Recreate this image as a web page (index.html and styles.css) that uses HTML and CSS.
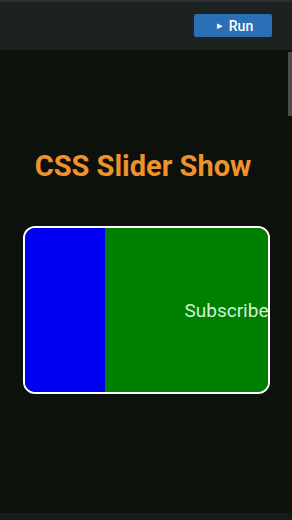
FILE: index.html
```html
<!DOCTYPE html>
<html lang="en">
<head>
    <meta charset="UTF-8">
    <meta name="viewport" content="width=device-width, initial-scale=1.0">
    <title>CSS Slider Show</title>
    <link rel="stylesheet" href="styles.css">
</head>
<body>
    <div class="topbar">
        <button class="run-btn"><span class="run-icon">&#9656;</span> Run</button>
    </div>

    <div class="preview">
        <h1 class="title">CSS Slider Show</h1>
        <div class="slider">
            <div class="track">
                <div class="slide blue"></div>
                <div class="slide green">Subscribe</div>
                <div class="slide red"></div>
            </div>
        </div>
        <div class="scroll-thumb"></div> <!-- fake scrollbar -->
    </div>
    <div class="bottom-strip"></div>
</body>
</html>
```

FILE: styles.css
```css
* {
    box-sizing: border-box;
}

body {
    margin: 0;
    width: 292px;
    height: 520px;
    overflow: hidden;
    background-color: #0c110c;
    font-family: Roboto, "Liberation Sans", sans-serif;
    display: flex;
    flex-direction: column;
}

.topbar {
    height: 50px;
    background-color: #1b2220;
    border-top: 2px solid #2a3031;
    display: flex;
    justify-content: flex-end;
    align-items: flex-start;
    padding: 12px 20px 0 0;
}

.run-btn {
    width: 78px;
    height: 23px;
    background-color: #2b6fb6;
    color: #ffffff;
    border: none;
    border-radius: 2px;
    font-family: Roboto, "Liberation Sans", sans-serif;
    font-size: 14px;
    font-weight: 500;
    display: flex;
    align-items: center;
    justify-content: center;
    gap: 6px;
    padding: 0 0 0 4px;
}

.run-icon {
    font-size: 11px;
}

.preview {
    position: relative;
    flex: 1;
    padding-top: 99px;
}

.title {
    margin: 0 0 43px 0;
    color: #ef922d;
    font-size: 29px;
    font-weight: 700;
    text-align: center;
    line-height: 34px;
    padding-right: 6px;
}

.slider {
    width: 247px;
    height: 168px;
    margin-left: 23px;
    border: 2px solid #ffffff;
    border-radius: 12px;
    overflow: hidden;
}

.track {
    display: flex;
    height: 100%;
    transform: translateX(-163px); /* mid-transition frame */
}

.slide {
    flex: 0 0 243px;
    height: 100%;
    display: flex;
    align-items: center;
    justify-content: center;
    color: #d4eed4;
    font-size: 19px;
}

.blue {
    background-color: #0000f5;
}

.green {
    background-color: #008000;
}

.red {
    background-color: #d00000;
}

.scroll-thumb {
    position: absolute;
    right: 0;
    top: 2px;
    width: 4px;
    height: 64px;
    background-color: #4b4e4b;
}

.bottom-strip {
    height: 7px;
    background-color: #151b17;
}
```
